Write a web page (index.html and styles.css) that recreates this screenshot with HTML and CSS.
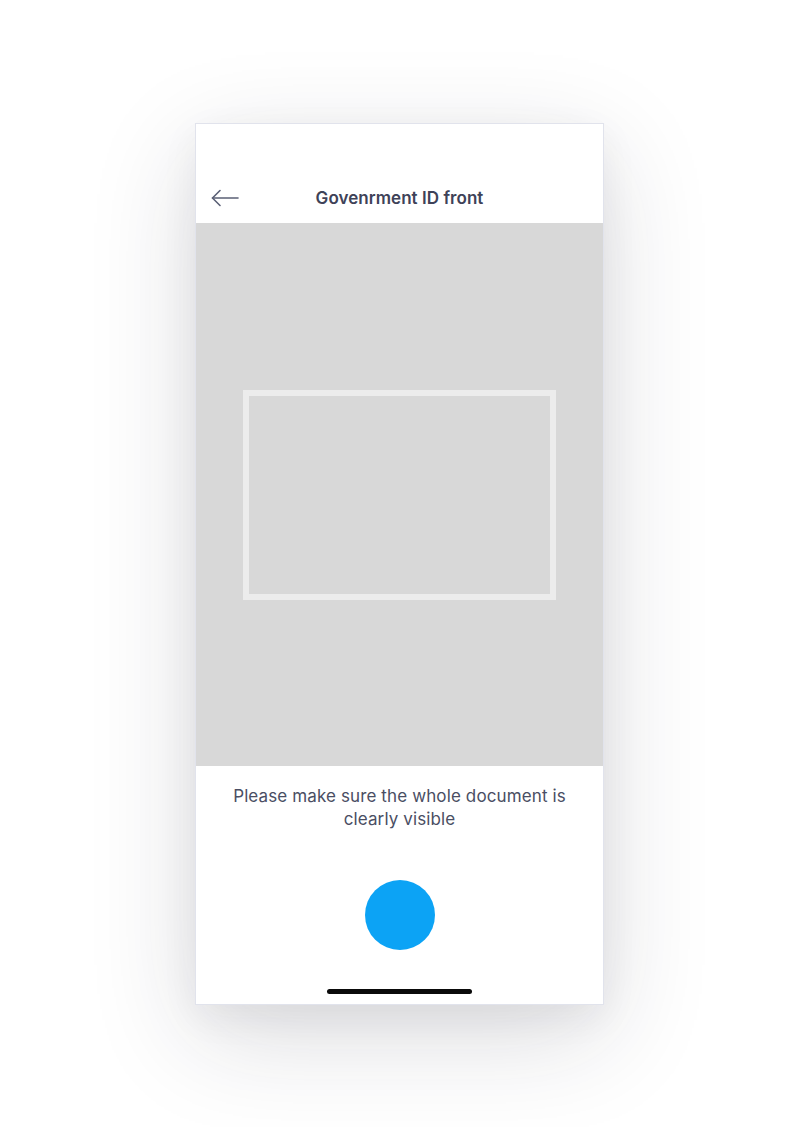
FILE: index.html
```html
<!DOCTYPE html>
<html lang="en">
<head>
<meta charset="utf-8">
<title>Government ID front</title>
<link rel="stylesheet" href="styles.css">
</head>
<body>
<div class="phone">
  <header class="header">
    <div class="nav">
      <button class="back" aria-label="Back">
        <svg width="28" height="18" viewBox="0 0 28 18" fill="none" stroke="#5b6076" stroke-width="1.6" stroke-linecap="round" stroke-linejoin="round"><path d="M27 9H1.5"/><path d="M9 1.5L1.5 9L9 16.5"/></svg>
      </button>
      <h1 class="title">Govenrment ID front</h1>
    </div>
  </header>
  <main class="camera">
    <div class="frame"></div>
  </main>
  <section class="bottom">
    <p class="hint">Please make sure the whole document is clearly visible</p>
    <button class="shutter" aria-label="Take photo"></button>
    <div class="home"></div>
  </section>
</div>
</body>
</html>
```
FILE: styles.css
```css
* { box-sizing: border-box; }
html, body { margin: 0; padding: 0; background: #ffffff; }
body {
  font-family: Inter, "Noto Sans", sans-serif;
  height: 1127px;
  overflow: hidden;
  padding-top: 123px;
  padding-left: 195px;
}
.phone {
  width: 409px;
  border: 1px solid #e1e3ec;
  background: #fff;
  display: flex;
  flex-direction: column;
  box-shadow: 0 30px 100px rgba(30, 30, 50, 0.16), 0 12px 36px rgba(30, 30, 50, 0.06);
}
.header {
  height: 99px;
  display: flex;
  flex-direction: column;
  justify-content: flex-end;
  padding-bottom: 1px;
}
.nav {
  height: 48px;
  display: flex;
  align-items: center;
  justify-content: center;
  position: relative;
}
.back {
  position: absolute;
  left: 15px;
  top: 15px;
  padding: 0;
  border: 0;
  background: none;
  display: flex;
}
.title {
  margin: 0;
  font-size: 17px;
  font-weight: 600;
  color: #3e4258;
  letter-spacing: 0.05px;
}
.camera {
  height: 543px;
  background: #d8d8d8;
  display: flex;
  align-items: center;
  justify-content: center;
}
.frame {
  width: 313px;
  height: 210px;
  border: 6px solid #ececec;
}
.bottom {
  height: 238px;
  display: flex;
  flex-direction: column;
  align-items: center;
  padding-top: 19px;
}
.hint {
  margin: 0;
  max-width: 350px;
  text-align: center;
  font-size: 17px;
  line-height: 23px;
  letter-spacing: 0.12px;
  color: #4a4e63;
}
.shutter {
  margin-top: 49px;
  width: 70px;
  height: 70px;
  border-radius: 50%;
  border: 0;
  padding: 0;
  background: #0ca3f5;
}
.home {
  margin-top: 39px;
  width: 145px;
  height: 5px;
  border-radius: 3px;
  background: #0a0a0a;
}
```
